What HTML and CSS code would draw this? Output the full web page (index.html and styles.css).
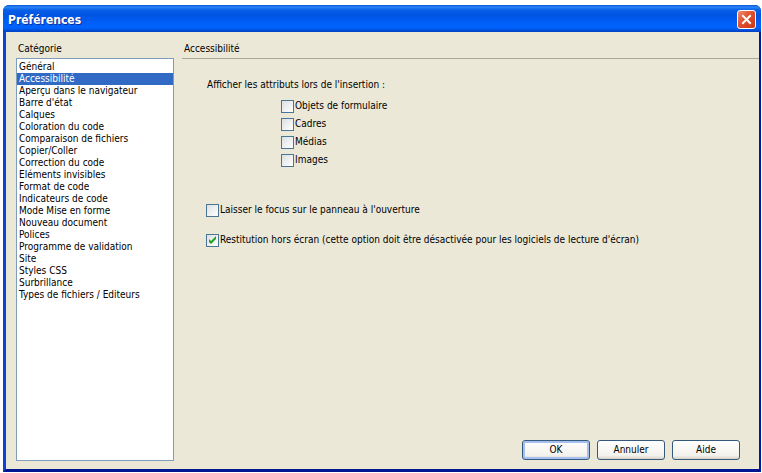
FILE: index.html
```html
<!DOCTYPE html>
<html lang="fr">
<head>
<meta charset="utf-8">
<title>Préférences</title>
<link rel="stylesheet" href="styles.css">
</head>
<body>
<main class="window">
  <header class="titlebar">
    <h1 class="title">Préférences</h1>
    <button class="close" type="button" aria-label="Fermer">
      <svg viewBox="0 0 17 17" width="17" height="17" aria-hidden="true"><path d="M5 5 L12 12 M12 5 L5 12" fill="none" stroke="#fff" stroke-width="2" stroke-linecap="square"/></svg>
    </button>
  </header>
  <form class="content">
    <section class="sidebar">
      <label class="heading" for="category">Catégorie</label>
      <select class="categories" id="category" size="20">
        <option>Général</option>
        <option selected>Accessibilité</option>
        <option>Aperçu dans le navigateur</option>
        <option>Barre d'état</option>
        <option>Calques</option>
        <option>Coloration du code</option>
        <option>Comparaison de fichiers</option>
        <option>Copier/Coller</option>
        <option>Correction du code</option>
        <option>Eléments invisibles</option>
        <option>Format de code</option>
        <option>Indicateurs de code</option>
        <option>Mode Mise en forme</option>
        <option>Nouveau document</option>
        <option>Polices</option>
        <option>Programme de validation</option>
        <option>Site</option>
        <option>Styles CSS</option>
        <option>Surbrillance</option>
        <option>Types de fichiers / Editeurs</option>
      </select>
    </section>
    <section class="panel">
      <h2 class="heading panel-heading">Accessibilité</h2>
      <div class="options">
        <fieldset class="group">
          <legend class="legend">Afficher les attributs lors de l'insertion :</legend>
          <div class="choices">
            <label class="check"><input type="checkbox">Objets de formulaire</label>
            <label class="check"><input type="checkbox">Cadres</label>
            <label class="check"><input type="checkbox">Médias</label>
            <label class="check"><input type="checkbox">Images</label>
          </div>
        </fieldset>
        <label class="check"><input type="checkbox">Laisser le focus sur le panneau à l'ouverture</label>
        <label class="check"><input type="checkbox" checked>Restitution hors écran (cette option doit être désactivée pour les logiciels de lecture d'écran)</label>
      </div>
      <footer class="actions">
        <button class="button button-default" type="button">OK</button>
        <button class="button" type="button">Annuler</button>
        <button class="button" type="button">Aide</button>
      </footer>
    </section>
  </form>
</main>
</body>
</html>
```

FILE: styles.css
```css
* {
  box-sizing: border-box;
}

body {
  margin: 0;
  padding: 5px 1px 1px 3px;
  min-height: 100vh;
  display: flex;
  background: #fff;
  color: #000;
  font: 10px/12px "DejaVu Sans Condensed", "Noto Sans", sans-serif;
}

.window {
  flex: 1;
  display: flex;
  flex-direction: column;
  border-radius: 6px 6px 0 0;
  background: #0a45d8;
  overflow: hidden;
}

.titlebar {
  height: 27px;
  display: flex;
  align-items: center;
  justify-content: space-between;
  padding: 2px 5px 0 5px;
  background: linear-gradient(#0a4fd0 0, #2a86f8 2px, #0a5fe8 5px, #0054e3 10px, #0060fa 19px, #0062fc 23px, #003fc0 27px);
}

.title {
  margin: 0;
  color: #fff;
  font: bold 12px/16px "DejaVu Sans Condensed", "Noto Sans", sans-serif;
  text-shadow: 1px 1px 0 #0a2f96;
}

.close {
  width: 19px;
  height: 19px;
  padding: 0;
  display: flex;
  border: 1px solid #fff;
  border-radius: 3px;
  background: linear-gradient(135deg, #ef8f70, #e05030 45%, #c83a14);
}

.content {
  flex: 1;
  display: flex;
  gap: 8px;
  padding: 10px 0 8px 10px;
  border: solid;
  border-width: 0 2px 3px 3px;
  border-color: #0a3fd0 #0019a0 #001590 #0a45d8;
  background: #ebe8d8;
}

.sidebar {
  width: 158px;
  display: flex;
  flex-direction: column;
}

.heading {
  margin: 0;
  padding: 0 2px;
  height: 16px;
  font-size: 10px;
  font-weight: normal;
  line-height: 14px;
}

.categories {
  flex: 1;
  width: 100%;
  padding: 2px 0;
  border: 1px solid #7f9db9;
  border-radius: 0;
  background: #fff;
  color: #000;
  font: inherit;
  outline: none;
  overflow: hidden;
}

.categories option {
  height: 12px;
  min-height: 12px;
  padding: 0 2px;
  line-height: 12px;
}

.categories option:checked {
  background: linear-gradient(#316ac5, #316ac5);
  -webkit-text-fill-color: #fff;
}

.panel {
  flex: 1;
  display: flex;
  flex-direction: column;
}

.panel-heading {
  height: 17px;
  border-bottom: 1px solid #aca899;
}

.options {
  flex: 1;
  display: flex;
  flex-direction: column;
  align-items: flex-start;
  gap: 16px;
  padding: 20px 24px;
}

.group {
  margin: 0 0 20px;
  padding: 0;
  border: 0;
}

.legend {
  padding: 0 1px;
}

.choices {
  display: flex;
  flex-direction: column;
  gap: 4px;
  padding: 8px 0 0 75px;
}

.check {
  display: flex;
  align-items: center;
  gap: 1px;
  height: 14px;
}

.check input {
  appearance: none;
  flex: none;
  width: 13px;
  height: 13px;
  margin: 0;
  border: 1px solid #4a7595;
  background: linear-gradient(135deg, #dcdfe2, #fff);
}

.check input:checked {
  background: url("data:image/svg+xml,%3Csvg xmlns='http://www.w3.org/2000/svg' viewBox='0 0 11 11'%3E%3Cpath d='M2 4v3l2 2 5-5V1L4 6z' fill='%2321a121'/%3E%3C/svg%3E") center / 11px 11px no-repeat, linear-gradient(135deg, #dcdfe2, #fff);
}

.actions {
  display: flex;
  justify-content: flex-end;
  gap: 7px;
  padding: 0 19px 1px 0;
}

.button {
  width: 68px;
  height: 20px;
  padding: 0;
  border: 1px solid #34597c;
  border-radius: 3px;
  background: linear-gradient(#fff, #f3f2ed 80%, #d8d2c6);
  color: #000;
  font: inherit;
}

.button-default {
  box-shadow: inset 0 0 0 2px #a5c0f0;
}
```
